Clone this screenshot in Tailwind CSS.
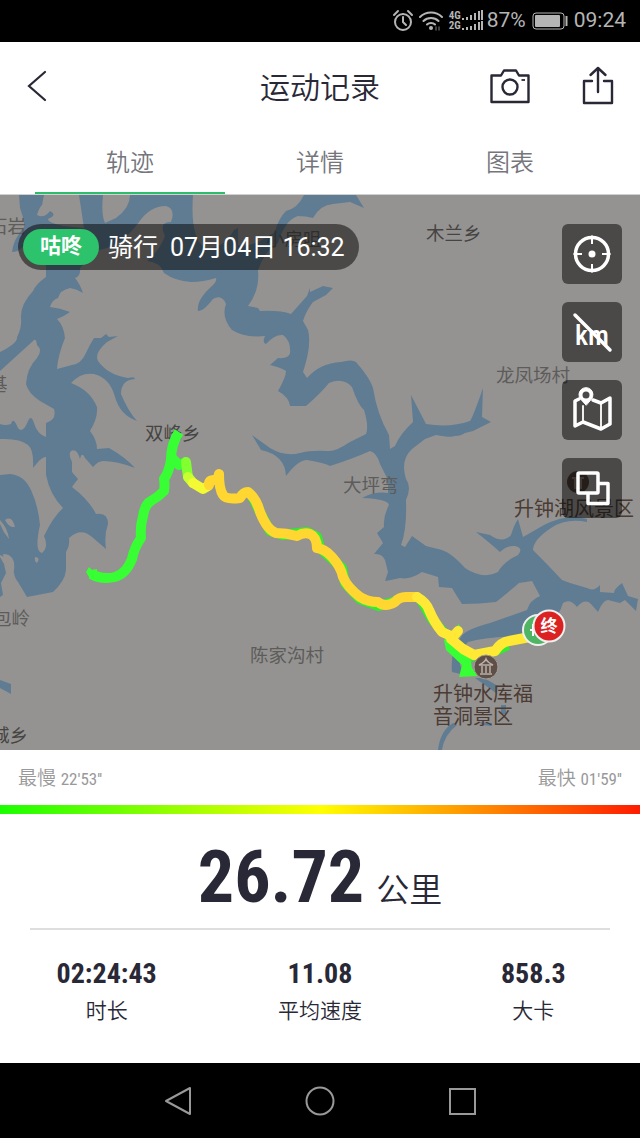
<!DOCTYPE html>
<html lang="zh-CN">
  <head>
    <meta charset="UTF-8" />
    <meta name="viewport" content="width=device-width, initial-scale=1.0" />
    <title>运动记录</title>
    <script src="https://cdn.jsdelivr.net/npm/@tailwindcss/browser@4"></script>
  </head>
  <body class="min-h-screen flex flex-col bg-white text-[#292836] font-['Roboto','Noto_Sans_CJK_SC',sans-serif]">
    <!-- Status bar -->
    <div class="flex h-[42px] items-center justify-end bg-black pr-3.5 text-[#b5b5b5]">
      <svg class="h-6 w-6" viewBox="0 0 24 24" fill="none" stroke="currentColor" stroke-width="2" stroke-linecap="round">
        <circle cx="12" cy="13" r="8" />
        <path d="M12 8v5l3 3M3 6l4-4M21 6l-4-4" />
      </svg>
      <svg class="ml-1 h-6 w-6" viewBox="0 0 24 24" fill="none" stroke="currentColor" stroke-width="2" stroke-linecap="round">
        <path d="M1 8c6-6 16-6 22 0M4.500 12c4-4 11-4 15 0M8 15.500c2-2 6-2 8 0" />
        <circle cx="12" cy="19" r="2" fill="currentColor" stroke="none" />
        <path d="M17 18v3M20 18v3" stroke="#555" stroke-width="1.500" />
      </svg>
      <div class="ml-1.5 font-['Roboto_Condensed','Liberation_Sans_Narrow',sans-serif] text-[11px] font-bold leading-[10px]">
        <div>4G</div>
        <div>2G</div>
      </div>
      <svg class="h-6 w-[22px]" viewBox="0 0 22 24" fill="currentColor">
        <path d="M1 9h2v2H1zM5 8h2v3H5zM9 6h2v5H9zM13 4h2v7h-2zM17 2h2v9h-2zM20 1h2v10h-2z" />
        <path d="M1 19h2v2H1zM5 18h2v3H5zM9 17h2v4H9zM13 15h2v6h-2zM17 13h2v8h-2zM20 12h2v9h-2z" />
      </svg>
      <span class="ml-1 text-[21px]">87%</span>
      <svg class="ml-1.5 h-[18px] w-9" viewBox="0 0 36 18">
        <rect x="1" y="1" width="31" height="16" rx="3" fill="none" stroke="currentColor" stroke-width="1" />
        <rect x="3" y="3" width="25" height="12" rx="1" fill="currentColor" />
        <path d="M34.500 4v10" stroke="currentColor" stroke-width="2" />
      </svg>
      <span class="ml-1.5 text-[21px]">09:24</span>
    </div>

    <!-- Header -->
    <header class="grid h-[88px] grid-cols-3 items-center px-6">
      <button aria-label="返回" class="justify-self-start">
        <svg class="h-9 w-6" viewBox="0 0 24 36" fill="none" stroke="currentColor" stroke-width="2.200" stroke-linecap="round">
          <path d="M21 4L5 18L21 32" />
        </svg>
      </button>
      <h1 class="pt-0.5 text-center text-[30px] font-[350]">运动记录</h1>
      <div class="flex items-center justify-end gap-[50px]">
        <button aria-label="拍照">
          <svg class="h-10 w-10" viewBox="0 0 40 40" fill="none" stroke="currentColor" stroke-width="2.400" stroke-linejoin="round">
            <path d="M1.500 9.500H11L14 4.500H26L29 9.500H38.500V36H1.500Z" />
            <circle cx="20" cy="21" r="7.500" />
            <path d="M31.500 14h3.500" stroke-width="1.800" />
          </svg>
        </button>
        <button aria-label="分享">
          <svg class="h-10 w-9" viewBox="0 0 36 40" fill="none" stroke="currentColor" stroke-width="2.400" stroke-linejoin="round" stroke-linecap="round">
            <path d="M12 15H4V37H32V15H24M18 26V2M10.500 9L18 2L25.500 9" />
          </svg>
        </button>
      </div>
    </header>

    <!-- Tabs -->
    <nav class="grid h-[65px] grid-cols-3 border-b border-[#d0d0d0] px-[35px] text-2xl font-[350] text-[#75757c]">
      <button class="border-b-2 border-[#2dbe6c] pt-1">轨迹</button>
      <button class="border-b-2 border-transparent pt-1">详情</button>
      <button class="border-b-2 border-transparent pt-1">图表</button>
    </nav>

    <!-- Map -->
    <main class="relative">
      <svg class="block w-full bg-[#949391]" viewBox="0 195 640 555" font-size="18.500">
        <g fill="#607c93">
          <!-- west river -->
          <path d="M19 195L20 208Q25 222 24 227Q13 240 12 252Q20 252 26 243L46 260L46 277Q36 284 33 291Q20 305 21 318Q22 328 17 337Q18 343 0 352V371L33 341Q36 337 37 345Q43 350 37 358Q27 368 26 384Q28 393 40 401L54 409Q57 420 46 423L46 437Q37 434 34 423Q31 414 28 421Q23 434 18 428Q13 416 11 424Q5 426 0 424V439Q20 438 28 445Q34 450 33 468Q42 456 46 457L46 475Q50 495 63 508Q53 517 44 536Q49 547 42 553Q34 552 40 525Q38 505 31 490Q24 475 10 474L0 475V555L14 562Q12 575 18 582L27 597L53 592Q65 581 66 570V552Q70 546 69 538Q81 527 92 537L106 549Q104 535 108 524Q108 512 96 514Q89 500 72 487Q74 484 78 479L72 472V462Q68 454 71 451Q77 448 80 459Q82 451 85 458L93 467Q98 461 103 461Q117 461 135 468Q125 457 109 448L97 449Q97 440 90 431Q98 418 97 407Q90 390 71 383Q81 372 94 374Q110 378 115 397Q120 415 137 421Q128 411 121 394Q121 380 135 379Q135 376 128 378Q108 375 98 361Q94 353 107 342L118 336L109 337L106 334L101 338L94 338Q90 344 86 353Q81 364 72 365L57 369Q58 355 65 338Q64 326 57 319Q63 317 70 312Q60 308 50 307Q52 300 58 298Q60 290 70 288Q77 289 83 293Q80 284 75 278Q81 276 80 268L97 250Q120 248 139 222Q150 206 166 206Q176 209 171 222Q158 222 165 236Q160 250 147 261Q160 262 164 273Q175 281 191 282Q203 282 216 278Q217 282 213 285Q196 300 198 311Q203 312 213 299Q222 294 226 304Q221 317 232 330Q245 338 265 336Q262 343 266 344Q275 334 283 335Q291 341 290 353Q289 359 278 358L270 365Q282 368 286 371Q286 377 278 391Q289 397 290 406H306Q320 394 329 383Q343 377 352 387Q358 405 364 410Q369 426 366 434L350 442Q335 452 328 451Q310 450 300 453Q285 457 270 448L252 435L261 450Q285 455 286 476Q298 460 307 460Q325 463 330 466Q352 459 370 451Q377 453 380 464L388 480V493Q375 491 362 498Q388 499 389 505Q383 516 384 527L377 533L383 543L374 554Q382 553 385 560L388 572L385 581Q392 580 400 578Q410 580 422 572L438 577L439 587L452 588Q456 595 462 604Q480 604 496 602Q510 591 519 583L532 581L540 596Q530 600 527 610L490 623Q464 630 461 637Q450 650 452 672L465 675L460 665Q460 648 468 642Q488 636 530 636Q556 626 563 603Q570 598 577 607Q585 598 591 604L598 612Q603 600 608 600L620 603L625 600L636 611L638 599L628 596L622 583Q614 589 614 593L600 592V585Q594 592 587 588L570 583L562 580Q548 565 533 550Q533 540 551 528Q566 518 587 522V519Q568 513 544 525L523 537L518 519Q514 525 511 535Q503 544 490 535L476 532Q490 543 500 552Q507 545 515 546Q524 548 518 555Q503 562 498 572L493 574Q480 578 465 568Q450 551 438 549L426 546L412 536L405 547L401 545Q407 530 406 500Q412 487 406 479Q400 460 412 449L425 439L436 435Q451 438 455 436Q461 436 465 433L473 431L491 422L482 417L483 388Q473 417 470 421Q450 428 426 424L411 395L413 422Q400 434 395 446L390 449L389 435Q377 414 373 388Q370 378 356 362Q352 359 341 362Q320 363 307 378L303 372Q312 345 308 330L303 321Q306 311 313 302L326 295L333 288L323 286L310 292V288L307 296L291 314Q280 310 260 311L258 308L248 306Q260 290 258 270Q265 250 278 243Q285 220 298 216Q306 216 313 218Q320 205 333 204L350 202L364 208L356 195H304Q298 208 286 211Q278 219 275 232Q250 249 238 245V228L234 230Q224 249 205 248Q190 238 193 195H130Q130 208 116 218L105 223Q101 215 103 195H79L84 228L64 226Q48 223 48 219Q58 215 50 211Q44 219 37 215Q39 208 42 205L44 195Z" />
          <path d="M0 557L4 564L6 573L1 583L3 595L0 597ZM0 680L11 684V694L0 688ZM438 750Q440 731 453 723L457 725Q444 735 442 750ZM475 678L484 678L498 686L496 693ZM501 705h5v9h-5zM480 722L492 723V726L482 725Z" />
        </g>
        <!-- islands -->
        <path fill="#949391" d="M5 520Q12 515 15 527Q9 528 5 520ZM0 520Q8 529 9 539Q3 532 0 524ZM35 557Q41 557 37 563Q34 561 35 557ZM3 554Q16 554 14 571Q4 568 3 554Z" />

        <!-- place names -->
        <g fill="#5d5c5a">
          <text x="-11" y="233">石岩</text>
          <text x="266" y="246">小房咀</text>
          <text x="496" y="382">龙凤场村</text>
          <text x="-11" y="391">基</text>
          <text x="343" y="492">大坪弯</text>
          <text x="-7" y="625">包岭</text>
          <text x="250" y="662">陈家沟村</text>
        </g>
        <g fill="#454442">
          <text x="426" y="240">木兰乡</text>
          <text x="145" y="440">双峰乡</text>
          <text x="-9" y="742">城乡</text>
        </g>
        <g fill="#4b3b33" font-size="20">
          <circle cx="578" cy="482" r="11" />
          <path d="M572 478H584M574 488H582M575 479V487M581 479V487" stroke="#94837a" stroke-width="1.500" />
          <text x="514" y="516">升钟湖风景区</text>
          <text x="433" y="701">升钟水库福</text>
          <text x="433" y="724">音洞景区</text>
        </g>

        <!-- track -->
        <g fill="none" stroke-width="10" stroke-linejoin="round">
          <path stroke="#2df02c" d="M252 496L262 516L270 531L283 535L307 532L317 537L320 548L342 568L345 583L360 599L379 606L396 601M420 598L432 619L444 633M470 657L495 651L508 645" />
          <path stroke="#37ff33" d="M179 432Q171 444 171 460Q169 472 164 479Q165 485 164 491Q158 497 151 501Q145 504 143 516Q140 527 141 538Q134 548 132 559Q126 574 115 577Q102 580 91 574M171 457L179 465L187 462" />
          <path fill="#37ff33" stroke="none" d="M86 572L89 567L92 570L97 569V580L89 577ZM444 640L459 624L461 632L455 645L470 655L472 668L478 676L459 677L462 665L446 650Z" />
          <path stroke="#82ff30" stroke-linecap="round" d="M186 462L187 470L188 477" />
          <path stroke="#c8ff31" stroke-linecap="round" d="M188 477L193 483" />
          <path stroke="#f3fa33" stroke-linecap="round" d="M193 483L203 489L208 486" />
          <path stroke="#ffd730" stroke-linecap="round" d="M209 485Q208 480 214 480L218 478L219 474Q219 489 223 495Q226 500 240 498Q243 492 248 492Q256 498 260 512Q267 530 276 533Q286 533 297 536Q304 532 310 534Q317 537 317 548Q325 549 332 557Q341 567 343 577Q347 587 360 597Q368 602 378 602Q385 608 395 602Q399 597 406 597H417" />
          <path stroke="#ffe935" stroke-linecap="round" d="M417 597Q426 602 429 610Q434 622 442 632L451 636M458 631L451 639L463 649L474 655L495 651Q501 642 509 641L530 637" />
        </g>

        <!-- scenic spot -->
        <circle cx="486" cy="667" r="12" fill="#5f4f46" stroke="#a39c97" />
        <path fill="none" stroke="#b8b0aa" stroke-width="1.500" d="M479 665Q485 662 486 659Q487 662 493 665ZM480 674H492M482 666V673M486 666V673M490 666V673" />

        <!-- start and end pins -->
        <circle cx="538" cy="630" r="15" fill="#4fb565" stroke="#f0efef" stroke-width="2" />
        <path d="M530 630h5M533 624v12" stroke="#fff" stroke-width="2" />
        <circle cx="549" cy="626" r="15.500" fill="#dc2122" stroke="#f0efef" stroke-width="2" />
        <text x="549" y="632" fill="#fff" font-size="17" font-weight="700" text-anchor="middle">终</text>
      </svg>

      <div class="absolute left-[18px] top-[29px] flex h-[46px] items-center rounded-full bg-black/50 pl-[5px] pr-3.5 text-[25px] text-white">
        <span class="mr-[9px] flex h-9 items-center rounded-full bg-[#2dc26c] px-[17px] text-[21px] font-bold">咕咚</span>
        <span class="mr-3 pt-0.5">骑行</span>
        <span class="pt-0.5">07月04日 16:32</span>
      </div>

      <div class="absolute right-[18px] top-[29px] flex flex-col gap-[18px] text-white">
        <button aria-label="定位" class="rounded-md bg-black/50">
          <svg class="size-[60px]" viewBox="0 0 60 60" fill="none" stroke="currentColor">
            <circle cx="30" cy="30" r="16.500" stroke-width="3.500" />
            <circle cx="30" cy="30" r="3.500" fill="currentColor" stroke="none" />
            <path d="M30 11.500V20M30 40V48.500M11.500 30H20M40 30H48.500" stroke-width="2" />
          </svg>
        </button>
        <button aria-label="隐藏公里标记" class="rounded-md bg-black/50">
          <svg class="size-[60px]" viewBox="0 0 60 60">
            <text x="30" y="43" text-anchor="middle" fill="currentColor" class="font-['Roboto_Condensed','Liberation_Sans_Narrow',sans-serif] text-[28px] font-medium">km</text>
            <path d="M13 13L48 48" stroke="currentColor" stroke-width="3.500" stroke-linecap="round" />
          </svg>
        </button>
        <button aria-label="地图类型" class="rounded-md bg-black/50">
          <svg class="size-[60px]" viewBox="0 0 60 60" fill="none" stroke="currentColor" stroke-width="3.500" stroke-linejoin="round" stroke-linecap="round">
            <path d="M17 19L13 21V46L21 42L39 49L48 44V18L39 23L31 20" />
            <path d="M21 26V42M39 23V49" stroke-width="1.800" />
            <path d="M24 25L18.500 19A7 7 0 1 1 29.500 19Z" fill="currentColor" stroke-width="1" />
            <circle cx="24" cy="15" r="3.500" fill="#4a4a48" stroke="none" />
          </svg>
        </button>
        <button aria-label="切换图层" class="rounded-md bg-black/50">
          <svg class="size-[60px]" viewBox="0 0 60 60" fill="none" stroke="currentColor" stroke-width="3.500" stroke-linejoin="round">
            <rect x="16" y="15" width="20" height="20" rx="1" />
            <path d="M36 25.500H46V45.500H26V35" />
          </svg>
        </button>
      </div>
    </main>

    <!-- Speed legend -->
    <div class="flex h-[55px] items-center justify-between px-[18px] pt-1 text-[19px] font-[350] text-[#999]">
      <div>最慢 <span class="font-['Roboto_Condensed','Liberation_Sans_Narrow',sans-serif] text-[17px] font-normal">22'53''</span></div>
      <div>最快 <span class="font-['Roboto_Condensed','Liberation_Sans_Narrow',sans-serif] text-[17px] font-normal">01'59''</span></div>
    </div>
    <div class="h-[9px] bg-linear-to-r/srgb from-[#1bff00] via-[#ffff00] to-[#ff1b00]"></div>

    <!-- Distance -->
    <div class="mx-[30px] flex h-[116px] items-baseline justify-center gap-3 border-b-2 border-[#dedede]">
      <span class="font-['Roboto_Condensed','Liberation_Sans_Narrow',sans-serif] text-[72px] font-bold leading-[128px]">26.72</span>
      <span class="text-[33px] font-[350]">公里</span>
    </div>

    <!-- Totals -->
    <dl class="grid grow grid-cols-3 content-start pt-[26px] text-center">
      <div class="flex flex-col-reverse">
        <dt class="text-[21px] font-[350] leading-[38px]">时长</dt>
        <dd class="font-['Roboto_Condensed','Liberation_Sans_Narrow',sans-serif] text-[28px] font-bold leading-9">02:24:43</dd>
      </div>
      <div class="flex flex-col-reverse">
        <dt class="text-[21px] font-[350] leading-[38px]">平均速度</dt>
        <dd class="font-['Roboto_Condensed','Liberation_Sans_Narrow',sans-serif] text-[28px] font-bold leading-9">11.08</dd>
      </div>
      <div class="flex flex-col-reverse">
        <dt class="text-[21px] font-[350] leading-[38px]">大卡</dt>
        <dd class="font-['Roboto_Condensed','Liberation_Sans_Narrow',sans-serif] text-[28px] font-bold leading-9">858.3</dd>
      </div>
    </dl>

    <!-- System navigation -->
    <nav class="flex h-[75px] items-center justify-center gap-28 bg-black text-[#999]">
      <button aria-label="后退">
        <svg class="size-[30px]" viewBox="0 0 30 30" fill="none" stroke="currentColor" stroke-width="2" stroke-linejoin="round">
          <path d="M27 2V28L3 15Z" />
        </svg>
      </button>
      <button aria-label="主屏幕">
        <svg class="size-[30px]" viewBox="0 0 30 30" fill="none" stroke="currentColor" stroke-width="2">
          <circle cx="15" cy="15" r="13.500" />
        </svg>
      </button>
      <button aria-label="最近任务">
        <svg class="size-[30px]" viewBox="0 0 30 30" fill="none" stroke="currentColor" stroke-width="2">
          <rect x="3" y="3" width="25" height="25" />
        </svg>
      </button>
    </nav>
  </body>
</html>
